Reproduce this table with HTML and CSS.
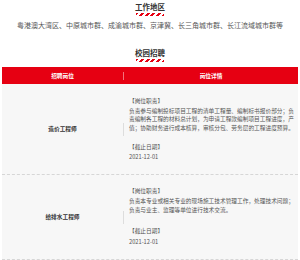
FILE: index.html
```html
<!DOCTYPE html>
<html lang="zh-CN">
<head>
<meta charset="utf-8">
<link rel="stylesheet" href="styles.css">
</head>
<body>
<section class="block">
  <h2 class="title">工作地区</h2>
  <div class="stripe"></div>
  <p class="areas">粤港澳大湾区、中原城市群、成渝城市群、京津冀、长三角城市群、长江流域城市群等</p>
</section>
<section class="block jobs">
  <h2 class="title">校园招聘</h2>
  <div class="stripe"></div>
  <div class="table">
    <div class="thead">
      <div class="th left">招聘岗位</div>
      <div class="th right">岗位详情</div>
    </div>
    <div class="row">
      <div class="name">造价工程师</div>
      <div class="detail">
        <p class="label">【岗位职责】</p>
        <p class="text">负责参与编制投标项目工程的清单工程量、编制标书报价部分；负责编制各工程的材料总计划，为申请工程款编制项目工程进度，产值；协助财务进行成本核算，审核分包、劳务层的工程进度预算。</p>
        <p class="label">【截止日期】</p>
        <p class="date">2021-12-01</p>
      </div>
    </div>
    <div class="row">
      <div class="name">给排水工程师</div>
      <div class="detail loose">
        <p class="label">【岗位职责】</p>
        <p class="text">负责本专业或相关专业的现场施工技术管理工作，处理技术问题；<br>负责与业主、监理等单位进行技术交流。</p>
        <p class="label">【截止日期】</p>
        <p class="date">2021-12-01</p>
      </div>
    </div>
  </div>
</section>
</body>
</html>
```
FILE: styles.css
```css
* { box-sizing: border-box; }
html, body { margin: 0; padding: 0; background: #fff; }
body {
  font-family: "Noto Sans CJK SC", "Noto Sans", sans-serif;
  color: #333;
  width: 300px;
  overflow: hidden;
}
.block {
  display: flex;
  flex-direction: column;
  align-items: center;
}
.block:first-child { padding-top: 2px; }
.title {
  margin: 0;
  font-size: 7.5px;
  line-height: 10px;
  font-weight: bold;
  color: #333;
}
.stripe {
  width: 28px;
  height: 3px;
  margin-top: 1px;
  background: repeating-linear-gradient(135deg, #e60012 0 2px, #fff 2px 4px);
}
.areas {
  margin: 4px 0 0;
  font-size: 7px;
  line-height: 10px;
  color: #555;
  white-space: nowrap;
}
.jobs { margin-top: 18px; }
.table {
  align-self: stretch;
  margin: 5px 2px 0;
}
.thead {
  display: flex;
  align-items: center;
  height: 17px;
  background: #e60012;
  color: #fff;
  font-size: 5.7px;
  font-weight: bold;
}
.th { text-align: center; }
.th.left { width: 121px; }
.th.right {
  flex: 1;
  border-left: 1px solid rgba(255,255,255,0.45);
  line-height: 8px;
}
.row {
  display: flex;
  align-items: center;
  background: #f7f7f7;
  border-bottom: 1px dashed #d6d6d6;
}
.name {
  width: 121px;
  text-align: center;
  font-size: 5.7px;
  font-weight: bold;
  color: #333;
}
.detail {
  flex: 1;
  position: relative;
  padding: 12.5px 4px 12px 6px;
  font-size: 5.7px;
  line-height: 8.5px;
  color: #555;
}
.detail::before {
  content: "";
  position: absolute;
  left: 0;
  top: 50%;
  height: 13px;
  margin-top: -6px;
  border-left: 1px solid #ddd;
}
.detail p { margin: 0; }
.detail .label { margin-bottom: 1.5px; }
.detail .text { margin-bottom: 11px; }
.detail.loose .text { margin-bottom: 12.5px; }
.detail.loose .label:nth-of-type(3) { margin-bottom: 3px; }
```
